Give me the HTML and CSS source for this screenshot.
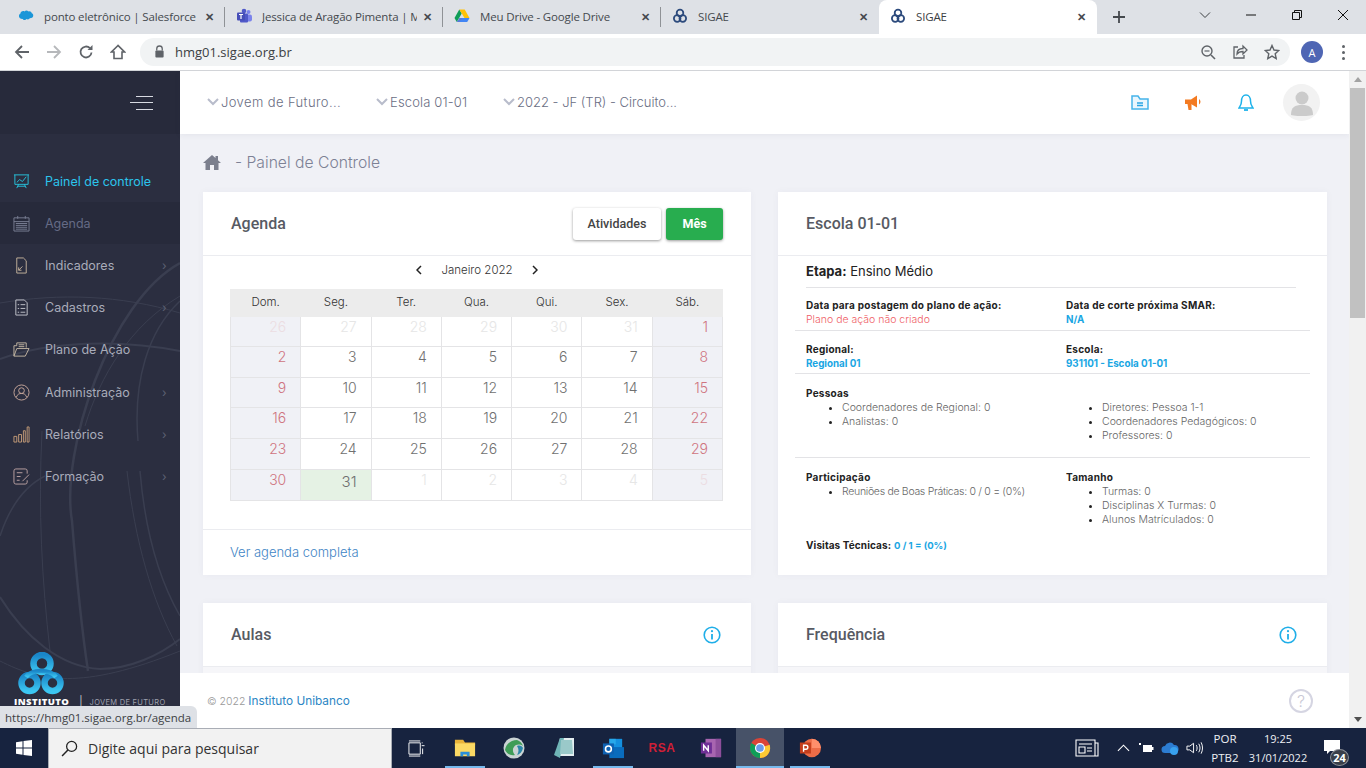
FILE: index.html
```html
<!DOCTYPE html>
<html lang="pt-BR">
<head>
<meta charset="utf-8">
<title>SIGAE</title>
<link rel="stylesheet" href="styles.css">
</head>
<body>
<div class="screen">
  <div class="tabstrip">
    <div class="tab"><svg class="fav" viewBox="0 0 16 16"><path fill="#1b96d8" d="M6.500 3.500c1-1.200 3-1.200 3.800 0 1.500-.6 3.200.3 3.500 1.800 1.400.5 2 2.500 1 3.800-.7 1-1.800 1.200-2.800 1-.6 1.300-2.300 1.700-3.400 1-.9 1.400-3.100 1.300-3.800-.2C2.300 11 .5 9.500 1 7.500c.2-1 .9-1.600 1.500-1.900C2.300 3.800 5 2.300 6.500 3.500z"/></svg><span class="tabtext">ponto eletrônico | Salesforce</span><span class="x">✕</span></div>
    <div class="tab"><svg class="fav" viewBox="0 0 16 16"><circle cx="12.500" cy="4" r="2" fill="#7b83eb"/><rect x="10" y="6.500" width="6" height="7" rx="2" fill="#7b83eb"/><circle cx="8" cy="3" r="2.300" fill="#5059c9"/><rect x="4" y="5.500" width="8" height="9" rx="1" fill="#5059c9"/><rect x="1" y="4.500" width="8" height="8" rx="1" fill="#464eb8"/><path d="M3 6.500h4M5 6.500v4.500" stroke="#fff" stroke-width="1.200"/></svg><span class="tabtext">Jessica de Aragão Pimenta | M</span><span class="x">✕</span></div>
    <div class="tab"><svg class="fav" viewBox="0 0 16 16"><path fill="#0f9d58" d="M5.300 1.500 .5 10l2.300 4 4.900-8.500z"/><path fill="#ffc107" d="M5.300 1.500h5.400l4.800 8.500h-5z"/><path fill="#4285f4" d="M5.400 10h10.100l-2.300 4H2.800z"/><path fill="#db4437" d="M5.400 10h2.600l-2.600 4H2.800z" opacity=".15"/></svg><span class="tabtext">Meu Drive - Google Drive</span><span class="x">✕</span></div>
    <div class="tab nosep"><svg class="fav" viewBox="0 0 16 16"><g fill="none" stroke="#2c4a7c" stroke-width="1.800"><circle cx="8" cy="5" r="3.300"/><circle cx="5.200" cy="10.500" r="3.300"/><circle cx="10.800" cy="10.500" r="3.300"/></g></svg><span class="tabtext">SIGAE</span><span class="x">✕</span></div>
    <div class="tab active"><svg class="fav" viewBox="0 0 16 16"><g fill="none" stroke="#2c4a7c" stroke-width="1.800"><circle cx="8" cy="5" r="3.300"/><circle cx="5.200" cy="10.500" r="3.300"/><circle cx="10.800" cy="10.500" r="3.300"/></g></svg><span class="tabtext">SIGAE</span><span class="x">✕</span></div>
    <svg class="newtab" viewBox="0 0 14 14"><path d="M7 1v12M1 7h12" stroke="#45494e" stroke-width="1.800"/></svg>
    <div class="winctl">
      <svg viewBox="0 0 12 12"><path d="M1 3.500 6 8.500l5-5" fill="none" stroke="#3c4043"/></svg>
      <svg viewBox="0 0 12 12"><path d="M1 6h10" stroke="#111" stroke-width="1"/></svg>
      <svg viewBox="0 0 12 12"><path d="M1.500 3.500h7v7h-7zM3.500 3.500v-2h7v7h-2" fill="none" stroke="#111"/></svg>
      <svg viewBox="0 0 12 12"><path d="M1 1l10 10M11 1 1 11" stroke="#111"/></svg>
    </div>
  </div>

  <div class="toolbar">
    <svg class="tb" viewBox="0 0 16 16"><path d="M15 8H2M8 2 2 8l6 6" fill="none" stroke="#5f6368" stroke-width="1.800"/></svg>
    <svg class="tb" viewBox="0 0 16 16"><path d="M1 8h13M8 2l6 6-6 6" fill="none" stroke="#b6b8bb" stroke-width="1.800"/></svg>
    <svg class="tb" viewBox="0 0 16 16"><path d="M13.500 8.500A5.500 5.500 0 1 1 12 4.200" fill="none" stroke="#5f6368" stroke-width="1.800"/><path d="M14.500 1v5h-5z" fill="#5f6368"/></svg>
    <svg class="tb" viewBox="0 0 16 16"><path d="M8 1.500 1.500 8H4v6.500h8V8h2.500z" fill="none" stroke="#5f6368" stroke-width="1.600"/></svg>
    <div class="omni">
      <svg class="lock" viewBox="0 0 12 14"><path d="M3 6V4a3 3 0 0 1 6 0v2" fill="none" stroke="#5f6368" stroke-width="1.400"/><rect x="1.500" y="6" width="9" height="7.500" rx="1" fill="#5f6368"/></svg>
      <span class="url">hmg01.sigae.org.br</span>
      <span class="omni-ic">
        <svg viewBox="0 0 16 16"><circle cx="7" cy="7" r="5" fill="none" stroke="#5f6368" stroke-width="1.400"/><path d="M11 11l4 4" stroke="#5f6368" stroke-width="1.600"/><path d="M4.500 7h5" stroke="#5f6368" stroke-width="1.200"/></svg>
        <svg viewBox="0 0 16 16"><path d="M6 3H2v11h10v-3" fill="none" stroke="#5f6368" stroke-width="1.300"/><path d="M5 10c0-4 3-5.500 6-5.500V2l4 4-4 4V7.500C8.500 7.500 6.500 8 5 10z" fill="none" stroke="#5f6368" stroke-width="1.300"/></svg>
        <svg viewBox="0 0 16 16"><path d="M8 1.500l2 4.500 4.800.5-3.600 3.200 1 4.800L8 12.100l-4.200 2.400 1-4.800L1.200 6.500 6 6z" fill="none" stroke="#5f6368" stroke-width="1.400"/></svg>
      </span>
    </div>
    <span class="profile">A</span>
    <span class="kebab"><i></i><i></i><i></i></span>
  </div>

  <div class="viewport">
    <aside class="sidebar">
      <svg class="globe" viewBox="0 0 180 657" preserveAspectRatio="none">
        <g fill="none" stroke="#3a3e50">
          <path stroke-width="2.500" d="M180 192C110 230 60 380 72 450c4 50 10 110 16 150"/>
          <path stroke-width="1" d="M0 232c60-10 120-8 180 10"/>
          <path stroke-width="2" d="M0 288c50-18 120-20 180-8"/>
          <path stroke-width="2" d="M0 526c25 40 60 70 100 72 30 0 60-14 80-30"/>
          <path stroke-width="1" d="M42 360c-4 80 0 150 8 220"/>
          <path stroke-width="1.500" d="M0 465c10-30 25-50 45-60"/>
          <path stroke-width="1.500" d="M140 400c5 60 20 110 40 145"/>
          <path stroke-width="1" d="M127 400c8 70 25 130 50 175"/>
          <path stroke-width="1" d="M180 225c-50 30-80 80-95 130"/>
          <path stroke-width="1.500" d="M138 370c-5-60 10-110 42-140"/>
          <path stroke-width="1" d="M0 590c40 20 80 30 180-10"/>
        </g>
      </svg>
      <div class="side-head">
        <span class="burger"><i></i><i></i><i></i></span>
      </div>
      <nav class="menu">
        <a class="item on"><svg viewBox="0 0 18 18"><path d="M1 2h16M2 2v10h14V2M4 10l3-3 3 2 4-5M6 12l-2 4M12 12l2 4M5 14h8" fill="none" stroke="#27c3dd"/></svg><span>Painel de controle</span></a>
        <a class="item dim"><svg viewBox="0 0 18 18"><path d="M1 3h16v14H1zM1 7h16M5 1v3M13 1v3M3 9h12M3 11h12M3 13h12M3 15h12" fill="none" stroke="#7a7f95"/></svg><span>Agenda</span></a>
        <a class="item"><svg viewBox="0 0 18 18"><path d="M4 1h7l3 3v13H4zM6 14l4-4M6 11v3h3" fill="none" stroke="#c5b29c"/></svg><span>Indicadores</span><b>›</b></a>
        <a class="item"><svg viewBox="0 0 18 18"><path d="M3 1h9l3 3v13H3zM8 6h5M8 10h5M8 14h5M5 6h1.500M5 10h1.500M5 14h1.500" fill="none" stroke="#c3c5cc"/></svg><span>Cadastros</span><b>›</b></a>
        <a class="item"><svg viewBox="0 0 18 18"><path d="M1 16V5h3V2h10v5M1 16h12l4-8H4zM6 4h6M6 6h6" fill="none" stroke="#c4b7a4"/></svg><span>Plano de Ação</span></a>
        <a class="item"><svg viewBox="0 0 18 18"><circle cx="9" cy="9" r="8" fill="none" stroke="#c8a89b"/><circle cx="9" cy="7" r="3" fill="none" stroke="#c8a89b"/><path d="M3.500 14c1-3 3-4 5.500-4s4.500 1 5.500 4" fill="none" stroke="#c8a89b"/></svg><span>Administração</span><b>›</b></a>
        <a class="item"><svg viewBox="0 0 18 18"><path d="M1 11h3v6H1zM6 9h3v8H6zM11 5h2v12h-2zM15 1h2v16h-2z" fill="none" stroke="#c49b78"/></svg><span>Relatórios</span><b>›</b></a>
        <a class="item"><svg viewBox="0 0 18 18"><path d="M3 1h10a2 2 0 0 1 2 2v3M15 13v2a2 2 0 0 1-2 2H3a2 2 0 0 1-2-2V3a2 2 0 0 1 2-2M4 5h6M4 9h4M4 13h3M10 14l7-7" fill="none" stroke="#bda4a4"/></svg><span>Formação</span><b>›</b></a>
      </nav>
      <div class="brand">
        <svg class="ring" viewBox="0 0 46 44"><defs><linearGradient id="rg" x1="0" y1="0" x2="0" y2="1"><stop offset="0" stop-color="#1a86c8"/><stop offset="1" stop-color="#3cc6f2"/></linearGradient></defs><g fill="none" stroke="url(#rg)" stroke-width="6.500"><circle cx="24" cy="11.500" r="8.500"/><circle cx="11.500" cy="31" r="8"/><circle cx="34.500" cy="31" r="8"/><path d="M8 25C14 17 32 17 38 25" stroke-width="4.500"/></g></svg>
        <div class="brandline"><strong>INSTITUTO</strong><em>|</em><span>JOVEM DE FUTURO</span></div>
      </div>
    </aside>

    <main class="main">
      <header class="topbar">
        <div class="selects">
          <span class="sel sel-a"><svg viewBox="0 0 12 8"><path d="M1 1l5 5 5-5" fill="none" stroke="#b8bccb" stroke-width="2"/></svg>Jovem de Futuro...</span>
          <span class="sel sel-b"><svg viewBox="0 0 12 8"><path d="M1 1l5 5 5-5" fill="none" stroke="#b8bccb" stroke-width="2"/></svg>Escola 01-01</span>
          <span class="sel sel-c"><svg viewBox="0 0 12 8"><path d="M1 1l5 5 5-5" fill="none" stroke="#b8bccb" stroke-width="2"/></svg>2022 - JF (TR) - Circuito...</span>
        </div>
        <div class="top-ic">
          <svg class="folder" viewBox="0 0 18 15"><path d="M1 1h6l2 3h8v10H1z" fill="#eaf6fd" stroke="#45b4ea" stroke-width="1.500"/><path d="M6 8h6M6 10.500h6" stroke="#2aa5e4" stroke-width="1.500"/></svg>
          <svg class="mega" viewBox="0 0 18 16"><path d="M0 4.500h6L12 .5v12L6 9H0z" fill="#f37a21"/><path d="M2.500 9h4v6h-3zM14 4c2 1.500 2 4 0 5.500z" fill="#f37a21"/></svg>
          <svg class="bell" viewBox="0 0 16 18"><path d="M8 1c-3 0-4.500 3-4.500 6 0 4-1.500 5-2.500 7h14c-1-2-2.500-3-2.500-7 0-3-1.500-6-4.500-6z" fill="#fff" stroke="#1eb2ea" stroke-width="1.500"/><path d="M6 16h4" stroke="#1eb2ea" stroke-width="1.800"/></svg>
          <span class="avatar"><svg viewBox="0 0 24 26"><circle cx="12" cy="8" r="6.500" fill="#cbcbcb"/><path d="M1 25c0-8 4-10 11-10s11 2 11 10c-4 1.500-18 1.500-22 0z" fill="#cbcbcb"/></svg></span>
        </div>
      </header>

      <div class="content">
        <div class="crumb">
          <svg viewBox="0 0 18 15"><path d="M9 0 0 8h2.500v7H7v-5h4v5h4.500V8H18l-3-2.700V1h-2.500v2.100z" fill="#7b7f8d"/></svg>
          <span>- Painel de Controle</span>
        </div>

        <div class="grid">
          <section class="card">
            <div class="card-head">
              <h2>Agenda</h2>
              <div class="btns"><button class="btn">Atividades</button><button class="btn green">Mês</button></div>
            </div>
            <div class="month"><svg viewBox="0 0 6 10"><path d="M5 1 1 5l4 4" fill="none" stroke="#222" stroke-width="1.500"/></svg><span>Janeiro 2022</span><svg viewBox="0 0 6 10"><path d="M1 1l4 4-4 4" fill="none" stroke="#222" stroke-width="1.500"/></svg></div>
            <table class="cal">
              <thead><tr><th>Dom.</th><th>Seg.</th><th>Ter.</th><th>Qua.</th><th>Qui.</th><th>Sex.</th><th>Sáb.</th></tr></thead>
              <tbody>
                <tr class="short"><td class="we off">26</td><td class="off">27</td><td class="off">28</td><td class="off">29</td><td class="off">30</td><td class="off">31</td><td class="we">1</td></tr>
                <tr><td class="we">2</td><td>3</td><td>4</td><td>5</td><td>6</td><td>7</td><td class="we">8</td></tr>
                <tr class="short"><td class="we">9</td><td>10</td><td>11</td><td>12</td><td>13</td><td>14</td><td class="we">15</td></tr>
                <tr><td class="we">16</td><td>17</td><td>18</td><td>19</td><td>20</td><td>21</td><td class="we">22</td></tr>
                <tr><td class="we">23</td><td>24</td><td>25</td><td>26</td><td>27</td><td>28</td><td class="we">29</td></tr>
                <tr><td class="we">30</td><td class="today">31</td><td class="off">1</td><td class="off">2</td><td class="off">3</td><td class="off">4</td><td class="we off">5</td></tr>
              </tbody>
            </table>
            <div class="card-foot"><a>Ver agenda completa</a></div>
          </section>

          <section class="card">
            <div class="card-head"><h2>Escola 01-01</h2></div>
            <div class="etapa"><b>Etapa:</b> Ensino Médio</div>
            <div class="inforow r1">
              <div><h4>Data para postagem do plano de ação:</h4><p class="red">Plano de ação não criado</p></div>
              <div><h4>Data de corte próxima SMAR:</h4><p class="blue">N/A</p></div>
            </div>
            <div class="inforow r2">
              <div><h4>Regional:</h4><p class="blue">Regional 01</p></div>
              <div><h4>Escola:</h4><p class="blue">931101 - Escola 01-01</p></div>
            </div>
            <div class="inforow r3">
              <div><h4>Pessoas</h4><ul><li>Coordenadores de Regional: 0</li><li>Analistas: 0</li></ul></div>
              <div><h4>&nbsp;</h4><ul><li>Diretores: Pessoa 1-1</li><li>Coordenadores Pedagógicos: 0</li><li>Professores: 0</li></ul></div>
            </div>
            <div class="inforow r4">
              <div><h4>Participação</h4><ul><li class="tight">Reuniões de Boas Práticas: 0 / 0 = (0%)</li></ul></div>
              <div><h4>Tamanho</h4><ul><li>Turmas: 0</li><li>Disciplinas X Turmas: 0</li><li>Alunos Matrículados: 0</li></ul></div>
            </div>
            <div class="visitas"><b>Visitas Técnicas:</b> <span class="blue">0 / 1 = (0%)</span></div>
          </section>

          <section class="card low">
            <div class="card-head"><h2>Aulas</h2><svg class="info" viewBox="0 0 18 18"><circle cx="9" cy="9" r="7.800" fill="none" stroke="#1faee8" stroke-width="1.600"/><path d="M9 8v5.500" stroke="#1faee8" stroke-width="1.800"/><circle cx="9" cy="5.200" r="1.100" fill="#1faee8"/></svg></div>
          </section>
          <section class="card low">
            <div class="card-head"><h2>Frequência</h2><svg class="info" viewBox="0 0 18 18"><circle cx="9" cy="9" r="7.800" fill="none" stroke="#1faee8" stroke-width="1.600"/><path d="M9 8v5.500" stroke="#1faee8" stroke-width="1.800"/><circle cx="9" cy="5.200" r="1.100" fill="#1faee8"/></svg></div>
          </section>
        </div>
      </div>

      <footer class="pagefoot">
        <span>© 2022 <a>Instituto Unibanco</a></span>
        <span class="help">?</span>
      </footer>
    </main>

    <div class="scrollbar">
      <i class="up"></i>
      <i class="thumb"></i>
      <i class="down"></i>
    </div>

    <div class="status">https://hmg01.sigae.org.br/agenda</div>
  </div>

  <div class="taskbar">
    <svg class="win" viewBox="0 0 16 16"><path fill="#fff" d="M0 2.200 6.500 1.300v6.200H0zM7.500 1.100 16 0v7.500H7.500zM0 8.500h6.500v6.200L0 13.800zM7.500 8.500H16V16l-8.500-1.100z"/></svg>
    <div class="search">
      <svg viewBox="0 0 16 16"><circle cx="10" cy="6" r="4.700" fill="none" stroke="#222" stroke-width="1.200"/><path d="M6.500 9.500 1 15" stroke="#222" stroke-width="1.400"/></svg>
      <span>Digite aqui para pesquisar</span>
    </div>
    <div class="apps">
      <span class="app"><svg viewBox="0 0 18 18"><path d="M1 3h12v12H1zM14.500 3h1M14.500 6h3M15.500 9v6M1 1h12M1 17h12" fill="none" stroke="#fff"/></svg></span>
      <span class="app run"><svg viewBox="0 0 24 20"><path d="M1 1h9l2 3h11v3H1z" fill="#e8b33a"/><rect x="1" y="5" width="22" height="14" fill="#fbd964"/><path d="M7 19v-5h10v5h-3v-2h-4v2z" fill="#2b8fd8"/></svg></span>
      <span class="app"><svg viewBox="0 0 22 22"><circle cx="11" cy="11" r="10.500" fill="#c9d3d3"/><path d="M2 13c1-6 6-10 12-10 3 1 5 3 6 6-3-2-7-2-9 1-2 2-1 6 1 8-4 1-8-1-10-5z" fill="#3f9d57"/><path d="M14 9c3-1 5 0 6 2-1 4-3 6-6 7 2-3 2-6 0-9z" fill="#2b86a8"/></svg></span>
      <span class="app"><svg viewBox="0 0 22 22"><path d="M7 1h14v18H3z" fill="#e3eef0"/><path d="M7 1 1 18l6 3 4-20z" fill="#6fb4b6"/><path d="M8 3h11l1 14H7z" fill="#9ac9c9"/></svg></span>
      <span class="app run"><svg viewBox="0 0 24 22"><path d="M8 1h14v11H8z" fill="#1490df"/><path d="M8 1h7v6H8z" fill="#28a8ea"/><path d="M8 10l16 0v12H8z" fill="#0a6cbd"/><rect x="1" y="6" width="12" height="12" fill="#0f62b3"/><circle cx="7" cy="12" r="3.200" fill="none" stroke="#fff" stroke-width="1.700"/></svg></span>
      <span class="app"><span class="rsa">RSA</span></span>
      <span class="app"><svg viewBox="0 0 24 22"><rect x="6" y="1" width="17" height="20" fill="#a865b0"/><path d="M17 1h6v20h-6z" fill="#8d4e9b"/><rect x="1" y="5" width="12" height="12" fill="#6f2f96"/><path d="M4 14V8l5 6V8" fill="none" stroke="#fff" stroke-width="1.500"/></svg></span>
      <span class="app current"><svg viewBox="0 0 24 24"><circle cx="12" cy="12" r="11" fill="#db4437"/><path d="M12 12 22.500 8.500A11 11 0 0 1 12 23z" fill="#fcc934"/><path d="M12 12 12 23A11 11 0 0 1 2.500 6.500z" fill="#0f9d58"/><circle cx="12" cy="12" r="5.500" fill="#fff"/><circle cx="12" cy="12" r="4.200" fill="#6a9bea"/></svg></span>
      <span class="app run"><svg viewBox="0 0 24 22"><circle cx="14" cy="11" r="10" fill="#ed6c47"/><path d="M14 1a10 10 0 0 1 10 10H14z" fill="#ff8f6b"/><rect x="1" y="5" width="12" height="12" fill="#c43e1c"/><path d="M5 15V8h2.500a2 2 0 0 1 0 4.300H5" fill="none" stroke="#fff" stroke-width="1.500"/></svg></span>
    </div>
    <div class="tray">
      <svg class="news" viewBox="0 0 24 18"><path d="M1 1h19v16H1zM20 4h3v13h-3M4 5h13M4 8h6v6H4zM12 9h5M12 12h5" fill="none" stroke="#fff" stroke-width="1.100"/></svg>
      <svg class="caret" viewBox="0 0 14 8"><path d="M1 7l6-6 6 6" fill="none" stroke="#fff" stroke-width="1.200"/></svg>
      <svg class="batt" viewBox="0 0 16 12"><path d="M1 1h2v2H1zM5 3h9v7H5zM14 5h1.500v3H14z" fill="#fff"/></svg>
      <svg class="cloud" viewBox="0 0 18 14"><path d="M4 12a3.500 3.500 0 0 1 0-7 5 5 0 0 1 9-1 4 4 0 0 1 1 8z" fill="#2c7cd1"/><circle cx="13" cy="10" r="4" fill="#38a1ee"/></svg>
      <svg class="vol" viewBox="0 0 18 14"><path d="M1 5h3l4-3v10l-4-3H1z" fill="none" stroke="#fff"/><path d="M11 4c1 2 1 4 0 6M13.500 2.500c1.800 3 1.800 6 0 9M16 1c2 4 2 8 0 12" fill="none" stroke="#fff"/></svg>
      <div class="lang"><span>POR</span><span>PTB2</span></div>
      <div class="clock"><span>19:25</span><span>31/01/2022</span></div>
      <div class="notif"><svg viewBox="0 0 16 14"><path d="M0 0h16v11H6l-3 3v-3H0z" fill="#fff"/></svg><b>24</b></div>
    </div>
  </div>
</div>
</body>
</html>
```
FILE: styles.css
```css
*{box-sizing:border-box}
html,body{margin:0;height:100%;overflow:hidden}
body{font-family:"Inter","Liberation Sans",sans-serif;color:#333}
.screen{width:1366px;height:768px;display:flex;flex-direction:column}

/* browser chrome */
.tabstrip{height:34px;background:#dee1e6;display:flex;align-items:center;padding-left:7px;flex:none;position:relative}
.tab{width:218px;height:34px;flex:none;display:flex;align-items:center;padding:0 9px 2px 11px;font:11.500px "Open Sans","Liberation Sans",sans-serif;letter-spacing:-.15px;color:#45494e;position:relative}
.tab::after{content:"";position:absolute;right:0;top:7px;height:20px;width:1px;background:#8f9296}
.tab.nosep::after,.tab.active::after{display:none}
.tab.active{background:#fff;border-radius:8px 8px 0 0;color:#3c4043}
.fav{width:16px;height:16px;margin-right:10px;flex:none}
.tabtext{flex:1;min-width:0;white-space:nowrap;overflow:hidden}
.x{font-size:11px;font-weight:700;color:#45494e;width:14px;text-align:center;flex:none;margin-left:3px}
.newtab{width:14px;height:14px;margin-left:15px}
.winctl{margin-left:auto;display:flex;gap:34px;padding-right:17px;margin-top:-4px}
.winctl svg{width:12px;height:12px}
.toolbar{height:37px;background:#fff;border-bottom:1px solid #d2d4d8;display:flex;align-items:center;padding:0 0 0 14px;flex:none}
.tb{width:16px;height:16px;margin-right:16px}
.omni{width:1150px;height:28px;margin-left:-2px;margin-top:-1px;background:#f1f3f4;border-radius:14px;display:flex;align-items:center;padding:0 10px 0 14px}
.lock{width:11px;height:13px;margin-right:10px}
.url{font:13px "Open Sans","Liberation Sans",sans-serif;color:#3c4043}
.omni-ic{margin-left:auto;display:flex;gap:16px}
.omni-ic svg{width:16px;height:16px}
.profile{width:22px;height:22px;border-radius:50%;background:#4f66b4;color:#fff;font:11px "Open Sans",sans-serif;display:flex;align-items:center;justify-content:center;margin-left:11px}
.kebab{display:flex;flex-direction:column;gap:3px;margin-left:19px}
.kebab i{width:3px;height:3px;border-radius:50%;background:#5f6368;display:block}

/* page */
.viewport{height:657px;display:flex;position:relative;flex:none;overflow:hidden}
.sidebar{width:180px;flex:none;background:#2b2e40;position:relative;display:flex;flex-direction:column;overflow:hidden}
.globe{position:absolute;left:0;top:0;width:180px;height:657px}
.side-head{height:63px;background:#272a3b;position:relative;display:flex;justify-content:flex-end;align-items:center;padding-right:27px;flex:none}
.burger{display:flex;flex-direction:column;gap:5.500px;align-items:flex-end}
.burger i{display:block;height:1px;background:#d8dae2;width:17px}
.burger i:nth-child(2){width:23px}
.menu{position:relative;padding-top:26px;flex:none}
.item{height:42.2px;display:flex;align-items:center;padding-left:13px;font-size:12.500px;color:#a9acba;position:relative}
.item svg{width:17px;height:17px;margin-right:15px;flex:none}
.item b{position:absolute;left:162px;font-weight:400;color:#5d6173;font-size:12px}
.item.on{color:#2bc4ec}
.item.dim{background:#272a3b;color:#656a85}
.brand{position:relative;margin-top:auto;height:76px;padding-left:18px;flex:none}
.ring{width:46px;height:44px;display:block}
.brandline{display:flex;align-items:baseline;margin:-1px 0 0 -4px;color:#fff;white-space:nowrap}
.brandline strong{font:800 9.500px "Open Sans",sans-serif;letter-spacing:.4px}
.brandline em{font-style:normal;font-size:10px;margin:0 7px 0 10px;color:#ccc}
.brandline span{font-size:7.500px;color:#9ea1ae;letter-spacing:.3px}

.main{flex:1;min-width:0;display:flex;flex-direction:column;background:#f0f1f6}
.topbar{height:63px;background:#fff;flex:none;display:flex;align-items:center;justify-content:space-between;padding:0 29px 0 27px;box-shadow:0 1px 6px rgba(60,60,90,.07);position:relative}
.selects{display:flex;margin-top:-1px}
.sel{font-size:13px;font-weight:300;color:#6a6e83;display:flex;align-items:center;white-space:nowrap}
.sel svg{width:12px;height:8px;margin-right:2px}
.sel-a{width:169px;letter-spacing:.4px}
.sel-b{width:127px;letter-spacing:.15px}
.top-ic{display:flex;align-items:center}
.folder{width:18px;height:15px;margin-right:36px}
.mega{width:18px;height:16px;margin-right:35px}
.bell{width:16px;height:18px;margin-right:29px}
.avatar{width:37px;height:37px;border-radius:50%;background:#f2f2f2;display:flex;align-items:center;justify-content:center}
.avatar svg{width:24px;height:26px}

.content{flex:1;min-height:0;overflow:hidden;padding:0 22px 0 23px}
.crumb{height:58px;display:flex;align-items:center;font-size:15.700px;font-weight:300;color:#7d8195;padding-bottom:2px}
.crumb svg{width:18px;height:15px;margin-right:14px}
.grid{display:grid;grid-template-columns:548px 549px;column-gap:27px;row-gap:28px;grid-template-rows:383px 100px}
.card{background:#fff;position:relative;box-shadow:0 0 8px rgba(60,60,90,.04)}
.card.low{background:#f6f6f9}
.card-head{height:64px;background:#fff;border-bottom:1px solid #ebecf0;display:flex;align-items:center;justify-content:space-between;padding:0 28px 0 28px}
.card-head h2{font:500 16px Roboto,sans-serif;color:#575a63;margin:0}
.btns{display:flex;gap:5px}
.btn{height:32px;border:0;border-radius:3px;background:#fff;box-shadow:0 1px 3px rgba(0,0,0,.4);font:500 12.500px Roboto,sans-serif;color:#444;width:88px;padding:0}
.btn.green{background:#28ad4f;color:#fff;width:57px;font-weight:700}
.info{width:18px;height:18px;margin-right:2px}
.month{height:33px;display:flex;justify-content:center;align-items:center;font-size:11.500px;font-weight:300;color:#333;padding-bottom:5px}
.month span{margin:0 18px;width:74px;white-space:nowrap;text-align:center}
.month svg{width:6px;height:10px}
.cal{border-collapse:collapse;table-layout:fixed;width:493px;margin-left:27px}
.cal th{height:27px;background:#ececec;font-size:11.500px;font-weight:300;color:#333;border:1px solid #ececec;padding:0 0 2px}
.cal td{height:31px;border:1px solid #e4e4e6;text-align:right;vertical-align:top;padding:1px 14px 0 0;font-size:14px;font-weight:300;line-height:18px;color:#707070}
.cal .short td{height:30px}
.cal td.we{background:#f0f1f6;color:#cf7480}
.cal td.off{color:#e6e6e6}
.cal td.we.off{color:#ecdde2}
.cal td.today{background:#e5f2e4;font-size:15px;padding-top:3px}
.card-foot{position:absolute;left:0;right:0;bottom:0;height:46px;border-top:1px solid #ebecf0;display:flex;align-items:center;padding:0 0 2px 27px;font-size:13px;font-weight:300;color:#3f85c5}

.etapa{font-size:13px;height:32px;margin:0 31px 0 28px;padding-top:6px;line-height:18px;border-bottom:1px solid #e3e3e6;color:#222}
.etapa b{font-weight:700}
.inforow{display:grid;grid-template-columns:260px 1fr;margin:0 17px;padding-left:11px;font-size:10.500px;line-height:14px;font-weight:300;color:#666}
.inforow h4{margin:-1px 0 1px;font-size:10px;letter-spacing:.25px;font-weight:700;color:#222;line-height:14px;white-space:nowrap}
.inforow p{margin:0}
.inforow ul{margin:0;padding:0 0 0 36px}
.inforow li{white-space:nowrap}
.inforow li.tight{letter-spacing:-.3px}
.inforow li::marker{color:#222}
.r1{height:43px;padding-top:11px;border-bottom:1px solid #e3e3e6}
.r2{height:43px;padding-top:12px;border-bottom:1px solid #e3e3e6}
.r3{height:84px;padding-top:13px;border-bottom:1px solid #e3e3e6}
.r4{height:80px;padding-top:13px}
.red{color:#ef5f68;font-weight:300}
.blue{color:#19a6e3;font-weight:700;font-size:9.800px}
.visitas{margin-left:28px;font-size:10px;letter-spacing:.1px;line-height:14px}
.visitas b{color:#222}
.visitas .blue{font-size:9.500px;letter-spacing:0}

.pagefoot{height:55px;flex:none;background:#fff;position:relative;display:flex;align-items:center;justify-content:space-between;padding:0 36px 0 27px;font-size:10.500px;font-weight:300;color:#9a9a9a}
.pagefoot a{color:#2c86c4;font-weight:400;font-size:11.800px}
.help{width:24px;height:24px;border:2px solid #d5d5e2;border-radius:50%;color:#c9c9d6;font-size:16px;display:flex;align-items:center;justify-content:center}

.scrollbar{width:17px;flex:none;background:#f1f1f1;display:flex;flex-direction:column;align-items:center;position:relative}
.scrollbar .up{width:0;height:0;border:4px solid transparent;border-top:0;border-bottom:5px solid #a3a3a3;margin-top:6px}
.scrollbar .thumb{width:15px;height:230px;background:#c1c1c1;margin-top:6px}
.scrollbar .down{width:0;height:0;border:4px solid transparent;border-bottom:0;border-top:5px solid #505050;margin-top:auto;margin-bottom:6px}

.status{position:absolute;left:0;bottom:0;height:22px;width:197px;background:#dee1e6;border-radius:0 6px 0 0;font:11.500px "Open Sans","Liberation Sans",sans-serif;color:#3c4043;line-height:23px;padding-left:5px;white-space:nowrap}

/* taskbar */
.taskbar{height:40px;flex:none;background:#17233f;display:flex;align-items:center;color:#fff;font-family:"Open Sans","Liberation Sans",sans-serif}
.win{width:16px;height:16px;margin:0 16px}
.search{width:344px;height:40px;background:#f2f2f2;border:1px solid #a9adb5;border-bottom:0;display:flex;align-items:center;padding-left:12px;font-size:14px;color:#333}
.search svg{width:17px;height:17px;margin-right:10px}
.apps{display:flex;height:40px}
.app{width:48px;height:40px;display:flex;align-items:center;justify-content:center;position:relative;margin-right:1.200px}
.app svg{width:22px;height:22px}
.app:first-child svg{width:17px;height:17px}
.run::after,.current::after{content:"";position:absolute;left:4px;right:4px;bottom:0;height:2px;background:#76b9ed}
.current{background:#475268}
.current::after{left:0;right:0}
.rsa{font:700 12px "Liberation Sans",sans-serif;color:#d01f36;letter-spacing:.5px}
.tray{margin-left:auto;display:flex;align-items:center;height:40px;font-size:11.500px;color:#eef0f4;padding-right:14px}
.news{width:24px;height:18px;margin-right:18px}
.caret{width:13px;height:8px;margin-right:8px}
.batt{width:16px;height:12px;margin-right:7px}
.cloud{width:18px;height:14px;margin-right:7px}
.vol{width:17px;height:14px;margin-right:4px}
.lang,.clock{display:flex;flex-direction:column;align-items:center;line-height:19px}
.lang{width:36px;margin-right:2px}
.clock{width:66px;margin-right:5px;font-size:11px}
.notif{width:36px;height:40px;position:relative}
.notif svg{width:16px;height:14px;position:absolute;left:8px;top:12px}
.notif b{position:absolute;left:14px;top:21px;width:19px;height:17px;border-radius:50%;background:#3a3f4a;border:1px solid #8c8f96;font-size:11px;line-height:15px;text-align:center;color:#fff}
```
